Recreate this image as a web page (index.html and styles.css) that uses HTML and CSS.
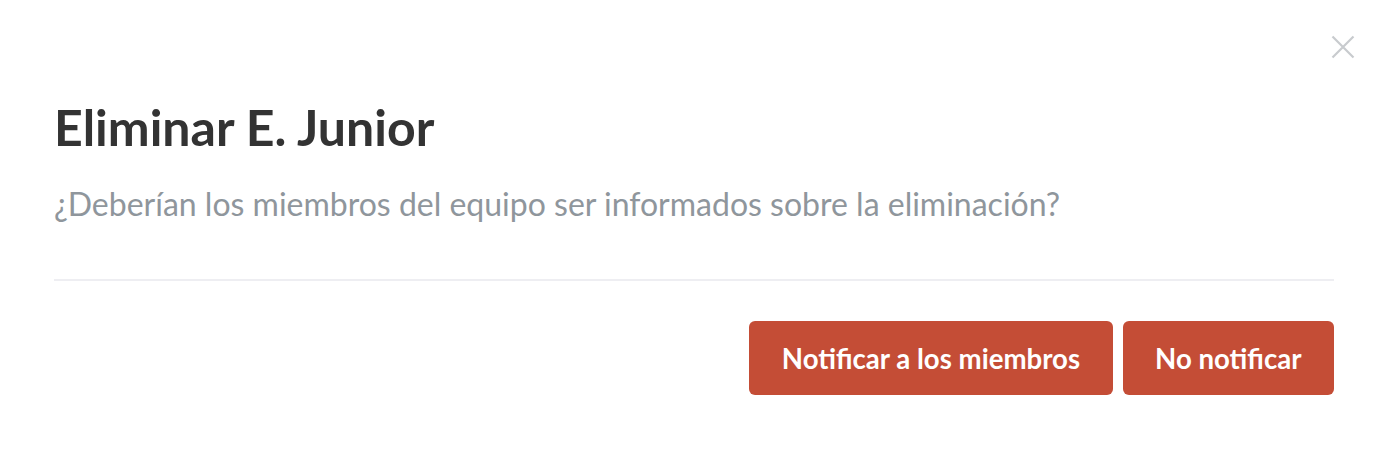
FILE: index.html
```html
<!DOCTYPE html>
<html lang="es">
<head>
<meta charset="utf-8">
<link rel="stylesheet" href="styles.css">
</head>
<body>
<div class="modal">
  <button class="close" aria-label="Cerrar">
    <svg width="24" height="24" viewBox="0 0 24 24"><path d="M1.5 1.5L22.5 22.5M22.5 1.5L1.5 22.5" stroke="#c8cbce" stroke-width="2.2" fill="none"/></svg>
  </button>
  <h1 class="title">Eliminar E. Junior</h1>
  <p class="subtitle">¿Deberían los miembros del equipo ser informados sobre la eliminación?</p>
  <hr class="divider">
  <div class="actions">
    <button class="btn">Notificar a los miembros</button>
    <button class="btn">No notificar</button>
  </div>
</div>
</body>
</html>
```
FILE: styles.css
```css
html, body {
  margin: 0;
  padding: 0;
  background: #fff;
}
body {
  font-family: Lato, "Open Sans", sans-serif;
}
.modal {
  position: relative;
  padding: 97px 56px 60px 54px;
}
.close {
  position: absolute;
  top: 35px;
  right: 35px;
  border: 0;
  background: none;
  padding: 0;
  width: 24px;
  height: 24px;
  cursor: pointer;
}
.close svg { display: block; }
.title {
  margin: 0;
  font-size: 50px;
  line-height: 60px;
  font-weight: 700;
  color: #333;
}
.subtitle {
  margin: 28px 0 0;
  font-size: 32px;
  line-height: 38px;
  color: #8f969c;
}
.divider {
  border: 0;
  border-top: 2px solid #eeeef2;
  margin: 56px 0 0;
}
.actions {
  display: flex;
  justify-content: flex-end;
  gap: 10px;
  margin-top: 40px;
}
.btn {
  font-family: Lato, "Open Sans", sans-serif;
  font-size: 27.6px;
  font-weight: 700;
  color: #fff;
  background: #c44d36;
  border: 0;
  border-radius: 6px;
  height: 74px;
  padding: 0 32.5px;
}
```
